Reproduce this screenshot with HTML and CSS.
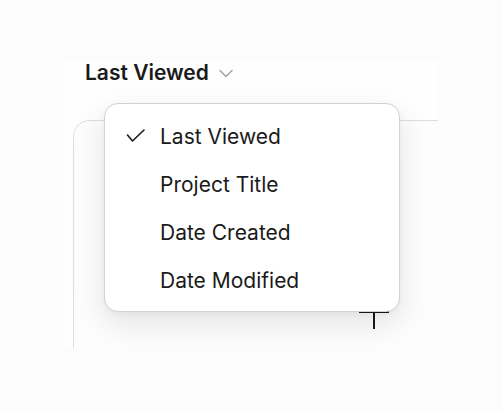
FILE: index.html
```html
<!DOCTYPE html>
<html>
<head>
<meta charset="utf-8">
<link rel="stylesheet" href="styles.css">
</head>
<body>
<div class="stage">
  <div class="sort-btn">
    <span class="sort-label">Last Viewed</span>
    <svg class="chevron" width="14" height="9" viewBox="0 0 14 9"><polyline points="1,1.5 7,7.5 13,1.5" fill="none" stroke="#a3a3a3" stroke-width="1.5" stroke-linecap="round" stroke-linejoin="round"/></svg>
  </div>
  <div class="card">
    <svg class="plus" width="32" height="34" viewBox="0 0 32 34"><line x1="1" y1="16" x2="31" y2="16" stroke="#1a1a1a" stroke-width="2"/><line x1="16" y1="0" x2="16" y2="33" stroke="#1a1a1a" stroke-width="2"/></svg>
  </div>
  <ul class="menu">
    <li class="item selected">
      <svg class="check" width="20" height="14" viewBox="0 0 20 14"><polyline points="1.5,6 6.5,12 18,1" fill="none" stroke="#1a1a1a" stroke-width="1.6" stroke-linecap="round" stroke-linejoin="round"/></svg>
      <span>Last Viewed</span>
    </li>
    <li class="item"><span>Project Title</span></li>
    <li class="item"><span>Date Created</span></li>
    <li class="item"><span>Date Modified</span></li>
  </ul>
</div>
</body>
</html>
```
FILE: styles.css
```css
html, body {
  margin: 0;
  padding: 0;
}
body {
  background: #fcfcfc;
  width: 502px;
  height: 412px;
  font-family: Inter, "Noto Sans", sans-serif;
  color: #1a1a1a;
}
.stage {
  position: relative;
  margin: 61px 0 0 64px;
  width: 374px;
  height: 287px;
  background: #fefefe;
  overflow: hidden;
}
.sort-btn {
  display: flex;
  align-items: center;
  gap: 10px;
  height: 24px;
  padding-left: 21px;
}
.sort-label {
  font-size: 21px;
  font-weight: 600;
  line-height: 24px;
  letter-spacing: 0;
}
.chevron {
  display: block;
  margin-top: 1px;
}
.card {
  margin: 35px 0 0 9px;
  width: 420px;
  height: 320px;
  border: 1.5px solid #dedede;
  border-radius: 16px;
  background: #fdfdfd;
  box-sizing: border-box;
  padding: 175px 0 0 284px;
}
.plus {
  display: block;
}
.menu {
  position: absolute;
  left: 40px;
  top: 42px;
  width: 296px;
  height: 209px;
  box-sizing: border-box;
  margin: 0;
  padding: 9px 0 8px;
  list-style: none;
  background: #fff;
  border: 1px solid #d2d2d2;
  border-radius: 14px;
  box-shadow: 0 12px 32px rgba(0, 0, 0, 0.10), 0 2px 6px rgba(0, 0, 0, 0.04);
}
.item {
  position: relative;
  display: flex;
  align-items: center;
  height: 48px;
  padding-left: 55px;
  font-size: 21px;
  line-height: 24px;
}
.check {
  position: absolute;
  left: 21px;
  top: 16px;
}
```
